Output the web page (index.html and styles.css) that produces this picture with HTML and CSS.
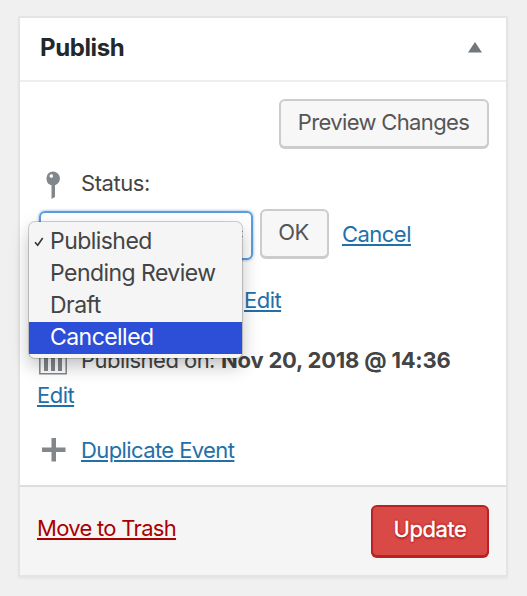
FILE: index.html
```html
<!DOCTYPE html>
<html lang="en">
<head>
<meta charset="utf-8">
<title>Publish</title>
<link rel="stylesheet" href="styles.css">
</head>
<body>
<section class="panel">
  <header class="panel-header">
    <h2 class="title">Publish</h2>
    <svg class="toggle" width="14" height="11" viewBox="0 0 14 11"><path d="M7 0L14 10.500H0z" fill="#72777c"/></svg>
  </header>
  <div class="panel-body">
    <div class="preview-row"><button class="button preview">Preview Changes</button></div>
    <div class="row status-row">
      <svg class="icon" width="32" height="32" viewBox="0 0 32 32"><path fill="#82878c" fill-rule="evenodd" d="M16 4.500a7 7 0 0 1 2 13.700V30L14.500 32V18.200A7 7 0 0 1 16 4.500zM14.300 7.300a1.800 1.800 0 1 0 0 3.600a1.800 1.800 0 0 0 0-3.600z"/></svg>
      <span class="status-label">Status:</span>
    </div>
    <div class="select-row">
      <div class="select">
        <svg class="select-arrows" width="12" height="18" viewBox="0 0 12 18"><path d="M0 7L6 1L12 7zM0 11H12L6 17z" fill="#444"/></svg>
        <ul class="menu">
          <li class="option"><svg class="check" width="10" height="10" viewBox="0 0 10 10"><path d="M1 5.200L3.700 8.300L8.700 1" fill="none" stroke="#333" stroke-width="1.600"/></svg>Published</li>
          <li class="option">Pending Review</li>
          <li class="option">Draft</li>
          <li class="option selected">Cancelled</li>
        </ul>
      </div>
      <button class="button ok">OK</button>
      <a class="link cancel">Cancel</a>
    </div>
    <div class="row visibility-row"><a class="link edit">Edit</a></div>
    <div class="row date-row">
      <svg class="icon" width="32" height="32" viewBox="0 0 32 32"><path fill="none" stroke="#82878c" stroke-width="1.500" d="M2.800 4V29.800H29.200V4"/><path fill="#82878c" d="M7 10h4v17H7zM14 10h4v17h-4zM21 10h4v17h-4z"/></svg>
      <span class="date-label">Published on:</span><b class="date">Nov 20, 2018 @ 14:36</b>
    </div>
    <div class="row edit-row"><a class="link edit">Edit</a></div>
    <div class="row duplicate-row">
      <svg class="icon" width="32" height="32" viewBox="0 0 32 32"><path fill="#82878c" d="M14.500 4h4.500v9.500h9.500v4.500H19V27.500h-4.500V18H5V13.500h9.500z"/></svg>
      <a class="link duplicate">Duplicate Event</a>
    </div>
  </div>
  <footer class="panel-footer">
    <a class="link trash">Move to Trash</a>
    <button class="button update">Update</button>
  </footer>
</section>
</body>
</html>
```

FILE: styles.css
```css
* { box-sizing: border-box; }

body {
  margin: 0;
  padding: 16px 19px 19px 18px;
  background: #f0f0f0;
  color: #444;
  font: 22px/32px Inter, "Liberation Sans", sans-serif;
  letter-spacing: -.53px;
  white-space: nowrap;
}

.panel {
  height: 561px;
  display: flex;
  flex-direction: column;
  background: #fff;
  border: 2px solid #e4e4e4;
  box-shadow: 0 2px 2px rgba(0, 0, 0, .04);
}

.panel-header {
  height: 64px;
  padding: 0 24px 4px 20px;
  display: flex;
  align-items: center;
  justify-content: space-between;
  border-bottom: 2px solid #eee;
}

.title {
  margin: 2px 0 0;
  color: #23282d;
  font-size: 24px;
  font-weight: 700;
  letter-spacing: -.4px;
}

.panel-body {
  height: 403px;
  padding: 17px 17px 0;
}

.button {
  display: flex;
  align-items: center;
  justify-content: center;
  padding: 0 0 4px;
  border: 2px solid #ccc;
  border-radius: 6px;
  background: #f7f7f7;
  box-shadow: 0 1px 0 #ccc;
  color: #555;
  font: inherit;
  letter-spacing: -.65px;
}

.preview-row {
  display: flex;
  justify-content: flex-end;
  height: 50px;
}

.preview {
  width: 210px;
  height: 49px;
  padding: 0 1px 3px 0;
}

.row {
  height: 32px;
  display: flex;
  align-items: center;
}

.icon { margin-right: 12px; }
.status-row { margin-top: 18px; }
.status-label { letter-spacing: -.45px; }

.select-row {
  display: flex;
  height: 51px;
  margin-top: 10px;
  padding-left: 2px;
}

.select {
  position: relative;
  width: 214px;
  height: 49px;
  margin-top: 2px;
  border: 2px solid #5b9dd9;
  border-radius: 6px;
  box-shadow: 0 0 3px rgba(30, 100, 190, .6);
}

.select-arrows {
  position: absolute;
  right: 8px;
  top: 12px;
}

.menu {
  position: absolute;
  z-index: 1;
  left: -12px;
  top: 9px;
  width: 213px;
  height: 136px;
  margin: 0;
  padding: 4px 0;
  list-style: none;
  background: #f5f5f5;
  border-radius: 6px;
  box-shadow: 0 0 0 1px rgba(0, 0, 0, .18), 0 8px 18px rgba(0, 0, 0, .25);
  font-size: 23px;
  letter-spacing: -.55px;
}

.option {
  position: relative;
  height: 32px;
  padding-left: 21px;
  line-height: 31px;
}

.check {
  position: absolute;
  left: 5px;
  top: 11px;
}

.selected {
  background: #2d4fd8;
  color: #fff;
}

.ok {
  width: 69px;
  height: 49px;
  margin-left: 7px;
  padding-right: 2px;
}

.link {
  color: #236fa8;
  text-decoration: underline;
  text-decoration-thickness: 2px;
  text-underline-offset: 2px;
}

.cancel {
  height: 32px;
  margin: 9px 0 0 13px;
}

.visibility-row {
  margin-top: 24px;
  padding-left: 207px;
}

.date-row { margin-top: 28px; }

.date {
  margin-left: 6px;
  font-weight: 700;
  letter-spacing: -.2px;
}

.edit-row { margin-top: 3px; }
.duplicate-row { margin-top: 23px; }
.duplicate { letter-spacing: -.6px; }

.panel-footer {
  flex: 1;
  display: flex;
  align-items: flex-start;
  justify-content: space-between;
  padding: 18px 17px 0;
  border-top: 2px solid #ddd;
  background: #f5f5f5;
}

.trash {
  margin-top: 7px;
  color: #a00;
  letter-spacing: -.7px;
}

.update {
  width: 118px;
  height: 52px;
  border-color: #b92222;
  background: #d94a46;
  box-shadow: 0 1px 0 #b92222;
  color: #fff;
  letter-spacing: -.45px;
  text-shadow: 0 2px 2px #b92222, 0 -1px 2px #b92222, 1px 0 2px #b92222;
  -webkit-text-stroke: .4px #fff;
}
```
